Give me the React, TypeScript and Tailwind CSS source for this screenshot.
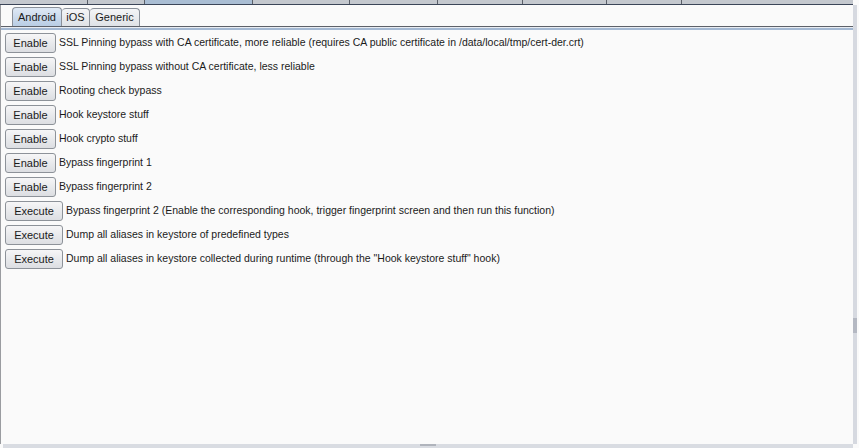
import React from "react";

const rows: { btn: string; text: string }[] = [
  { btn: "Enable", text: "SSL Pinning bypass with CA certificate, more reliable (requires CA public certificate in /data/local/tmp/cert-der.crt)" },
  { btn: "Enable", text: "SSL Pinning bypass without CA certificate, less reliable" },
  { btn: "Enable", text: "Rooting check bypass" },
  { btn: "Enable", text: "Hook keystore stuff" },
  { btn: "Enable", text: "Hook crypto stuff" },
  { btn: "Enable", text: "Bypass fingerprint 1" },
  { btn: "Enable", text: "Bypass fingerprint 2" },
  { btn: "Execute", text: "Bypass fingerprint 2 (Enable the corresponding hook, trigger fingerprint screen and then run this function)" },
  { btn: "Execute", text: "Dump all aliases in keystore of predefined types" },
  { btn: "Execute", text: "Dump all aliases in keystore collected during runtime (through the \"Hook keystore stuff\" hook)" },
];

export default function App() {
  return (
    <div
      className="w-[859px] h-[448px] bg-[#fafafa] relative overflow-hidden text-[10.5px] text-[#1a1a1a]"
      style={{ fontFamily: '"Liberation Sans", Arial, sans-serif' }}
    >
      {/* outer tab strip remnants */}
      <div className="flex h-[4px] w-[853px]">
        <div className="w-[88px] bg-[#c4c8ce] border-r border-[#5a5f68]" />
        <div className="w-[57px] bg-[#c4c8ce] border-r border-[#5a5f68]" />
        <div className="w-[107px] bg-[#a9bdd3]" />
        <div className="w-[98px] bg-[#c4c8ce] border-l border-r border-[#5a5f68]" />
        <div className="w-[88px] bg-[#c4c8ce] border-r border-[#5a5f68]" />
        <div className="w-[85px] bg-[#c4c8ce] border-r border-[#5a5f68]" />
        <div className="w-[84px] bg-[#c4c8ce] border-r border-[#5a5f68]" />
        <div className="w-[75px] bg-[#c4c8ce] border-r border-[#5a5f68]" />
        <div className="flex-1 bg-[#c4c8ce]" />
      </div>
      <div className="h-[1px] w-[853px] bg-[#3b4558]" />

      <div className="flex w-[859px]">
        <div className="w-[853px] border-l border-[#9a9ca0] h-[439px] flex flex-col">
          {/* inner tabs */}
          <div className="flex items-end h-[21px] pl-[11px] pt-[2px]">
            <div className="h-[19px] w-[50px] flex items-center justify-center rounded-t-[4px] border border-b-0 border-[#8a9099] bg-gradient-to-b from-[#dfe9f5] to-[#b9cde4] text-[11px]">
              Android
            </div>
            <div className="h-[18px] w-[28px] flex items-center justify-center rounded-t-[4px] border border-b-0 border-l-0 border-[#8a9099] bg-gradient-to-b from-[#f4f5f7] to-[#dfe2e6] text-[11px]">
              iOS
            </div>
            <div className="h-[18px] w-[50px] flex items-center justify-center rounded-t-[4px] border border-b-0 border-l-0 border-[#8a9099] bg-gradient-to-b from-[#f4f5f7] to-[#dfe2e6] text-[11px]">
              Generic
            </div>
          </div>
          <div className="h-[1px] bg-[#5d6169]" />
          <div className="h-[1px] bg-[#e8ecf2]" />
          <div className="h-[2px] bg-[#a3b8d2]" />

          {/* rows */}
          <div className="flex flex-col gap-[4px] pt-[3px] pl-[4px]">
            {rows.map((r, i) => (
              <div key={i} className="flex items-center h-[20px]">
                <button
                  className={`h-[20px] ${r.btn === "Enable" ? "w-[51px]" : "w-[58px]"} rounded-[3px] border border-[#8d9299] bg-gradient-to-b from-[#f6f6f7] to-[#dcdee2] flex items-center justify-center text-[11px] text-[#1a1a1a]`}
                >
                  {r.btn}
                </button>
                <span className="ml-[3px] whitespace-nowrap">{r.text}</span>
              </div>
            ))}
          </div>
          <div className="flex-1" />
        </div>
        {/* right scrollbar */}
        <div className="w-[4px] h-[439px] bg-[#d6d9e0] flex flex-col">
          <div className="h-[313px]" />
          <div className="h-[15px] bg-[#b4b8c2]" />
        </div>
      </div>
      {/* bottom scrollbar */}
      <div className="absolute left-[3px] bottom-0 w-[850px] h-[4px] bg-[#d9dce2]">
        <div className="absolute left-[417px] top-0 w-[16px] h-[2px] bg-[#b0b4bc]" />
      </div>
    </div>
  );
}
